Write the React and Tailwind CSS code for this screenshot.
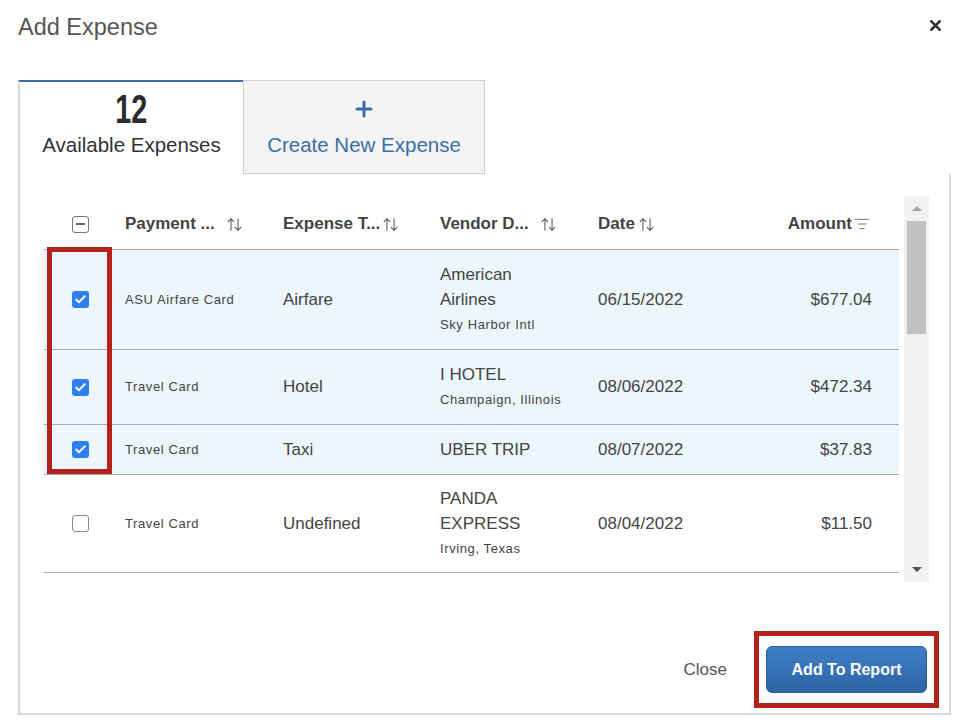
import { X, Plus, ArrowUpDown, ListFilter, Check } from "lucide-react";

const rows = [
  { pay: "ASU Airfare Card", type: "Airfare", vendor: ["American", "Airlines"], place: "Sky Harbor Intl", date: "06/15/2022", amount: "$677.04", checked: true },
  { pay: "Travel Card", type: "Hotel", vendor: ["I HOTEL"], place: "Champaign, Illinois", date: "08/06/2022", amount: "$472.34", checked: true },
  { pay: "Travel Card", type: "Taxi", vendor: ["UBER TRIP"], place: "", date: "08/07/2022", amount: "$37.83", checked: true },
  { pay: "Travel Card", type: "Undefined", vendor: ["PANDA", "EXPRESS"], place: "Irving, Texas", date: "08/04/2022", amount: "$11.50", checked: false },
];

const grid = "grid grid-cols-[81px_158px_157px_158px_160px_141px]";

function Box({ checked }) {
  if (checked) {
    return (
      <div className="w-[17px] h-[17px] rounded-[3px] bg-[#2f7ff0] flex items-center justify-center">
        <Check size={13} strokeWidth={3.5} color="#fff" />
      </div>
    );
  }
  return <div className="w-[17px] h-[17px] rounded-[3px] border-[1.5px] border-[#8a8a8a] bg-white" />;
}

function HeadCell({ label, icon = "sort", gap = "gap-[4px]" }) {
  return (
    <div className={`flex items-center ${gap}`}>
      <span>{label}</span>
      {icon === "sort" ? (
        <ArrowUpDown size={17} strokeWidth={1.5} color="#555" />
      ) : (
        <ListFilter size={16} strokeWidth={1.5} color="#777" />
      )}
    </div>
  );
}

export default function App() {
  return (
    <div className="w-[964px] h-[724px] bg-white font-['Liberation_Sans',Arial,sans-serif] text-[#333]">
      {/* Title bar */}
      <div className="h-[80px] flex items-start justify-between pl-[18px] pr-[20px] pt-[11px]">
        <h1 className="text-[23.5px] text-[#555] leading-[32px]">Add Expense</h1>
        <X size={17} strokeWidth={3.5} color="#333" className="mt-[6px]" />
      </div>

      <div className="ml-[18px] w-[933px]">
        {/* Tabs */}
        <div className="flex h-[94px]">
          <div className="w-[225px] border-t-2 border-l-2 border-t-[#3b6ea8] border-l-[#d8d8d8] flex flex-col items-center">
            <div className="mt-[8px] h-[38px] leading-[38px] text-[40px] font-bold text-[#2b2b2b] font-['Liberation_Sans_Narrow','Liberation_Sans',sans-serif] scale-x-[0.72]">
              12
            </div>
            <div className="mt-[2px] text-[20.5px] text-[#333]">Available Expenses</div>
          </div>
          <div className="w-[242px] border border-[#cfcfcf] bg-[#f4f4f4] flex flex-col items-center text-[#3b6ea8]">
            <Plus size={24} strokeWidth={3} className="mt-[16px]" />
            <div className="mt-[9px] text-[20.5px]">Create New Expense</div>
          </div>
        </div>

        {/* Panel */}
        <div className="h-[541px] border-2 border-t-0 border-[#d8d8d8] flex flex-col">
          <div className="flex pl-[24px] pt-[22px]">
            {/* Table */}
            <div className="relative w-[855px] h-[384px] overflow-hidden">
              <div className={`${grid} h-[54px] pt-[3px] items-center border-b border-[#a9a9a9] text-[17px] font-bold text-[#444]`}>
                <div className="flex pl-[28px]">
                  <div className="w-[17px] h-[17px] rounded-[3px] border-[1.5px] border-[#777] flex items-center justify-center">
                    <div className="w-[9px] h-[1.5px] bg-[#666]" />
                  </div>
                </div>
                <HeadCell label="Payment ..." gap="gap-[11px]" />
                <HeadCell label="Expense T..." gap="gap-[2px]" />
                <HeadCell label="Vendor D..." gap="gap-[11px]" />
                <HeadCell label="Date" gap="gap-[3px]" />
                <div className="flex justify-end pr-[29px]">
                  <HeadCell label="Amount" icon="filter" gap="gap-[2px]" />
                </div>
              </div>

              {rows.map((r, i) => (
                <div
                  key={i}
                  className={`${grid} items-center border-b border-[#a9a9a9] ${r.checked ? "bg-[#ecf6fd]" : "bg-white"}`}
                >
                  <div className="flex pl-[28px]">
                    <Box checked={r.checked} />
                  </div>
                  <div className="text-[13px] tracking-[0.6px] text-[#444]">{r.pay}</div>
                  <div className="text-[17px] text-[#444]">{r.type}</div>
                  <div className={`${i === 3 ? "py-[11px]" : "py-[12px]"} text-[#444]`}>
                    {r.vendor.map((v) => (
                      <div key={v} className="text-[17px] leading-[25px]">{v}</div>
                    ))}
                    {r.place && <div className="text-[13px] tracking-[0.6px] leading-[25px]">{r.place}</div>}
                  </div>
                  <div className="text-[17px] text-[#444]">{r.date}</div>
                  <div className="text-[17px] text-[#444] text-right pr-[27px]">{r.amount}</div>
                </div>
              ))}

              {/* highlight around selected checkboxes */}
              <div className="absolute left-[3px] top-[51px] w-[65px] h-[227px] border-[5px] border-[#b3221c]" />
            </div>

            {/* Scrollbar */}
            <div className="ml-[5px] w-[25px] h-[386px] bg-[#f1f1f1] flex flex-col items-center">
              <div className="h-[25px] flex items-center justify-center">
                <div className="w-0 h-0 border-l-[5px] border-r-[5px] border-b-[5px] border-l-transparent border-r-transparent border-b-[#a3a3a3]" />
              </div>
              <div className="w-[19px] h-[113px] bg-[#c1c1c1]" />
              <div className="flex-1" />
              <div className="h-[25px] flex items-center justify-center">
                <div className="w-0 h-0 border-l-[5px] border-r-[5px] border-t-[5px] border-l-transparent border-r-transparent border-t-[#505050]" />
              </div>
            </div>
          </div>

          {/* Footer */}
          <div className="flex-1 flex items-end justify-end pr-[10px] pb-[5px]">
            <div className="flex items-center">
              <button className="mr-[27px] text-[17px] text-[#555]">Close</button>
              <div className="border-[5px] border-[#b3221c] px-[7px] py-[10px]">
                <button className="w-[161px] h-[47px] rounded-[6px] bg-gradient-to-b from-[#4080c6] to-[#2c63a5] text-white font-bold text-[16px] border border-[#2a5f9e]">
                  Add To Report
                </button>
              </div>
            </div>
          </div>
        </div>
      </div>
    </div>
  );
}
